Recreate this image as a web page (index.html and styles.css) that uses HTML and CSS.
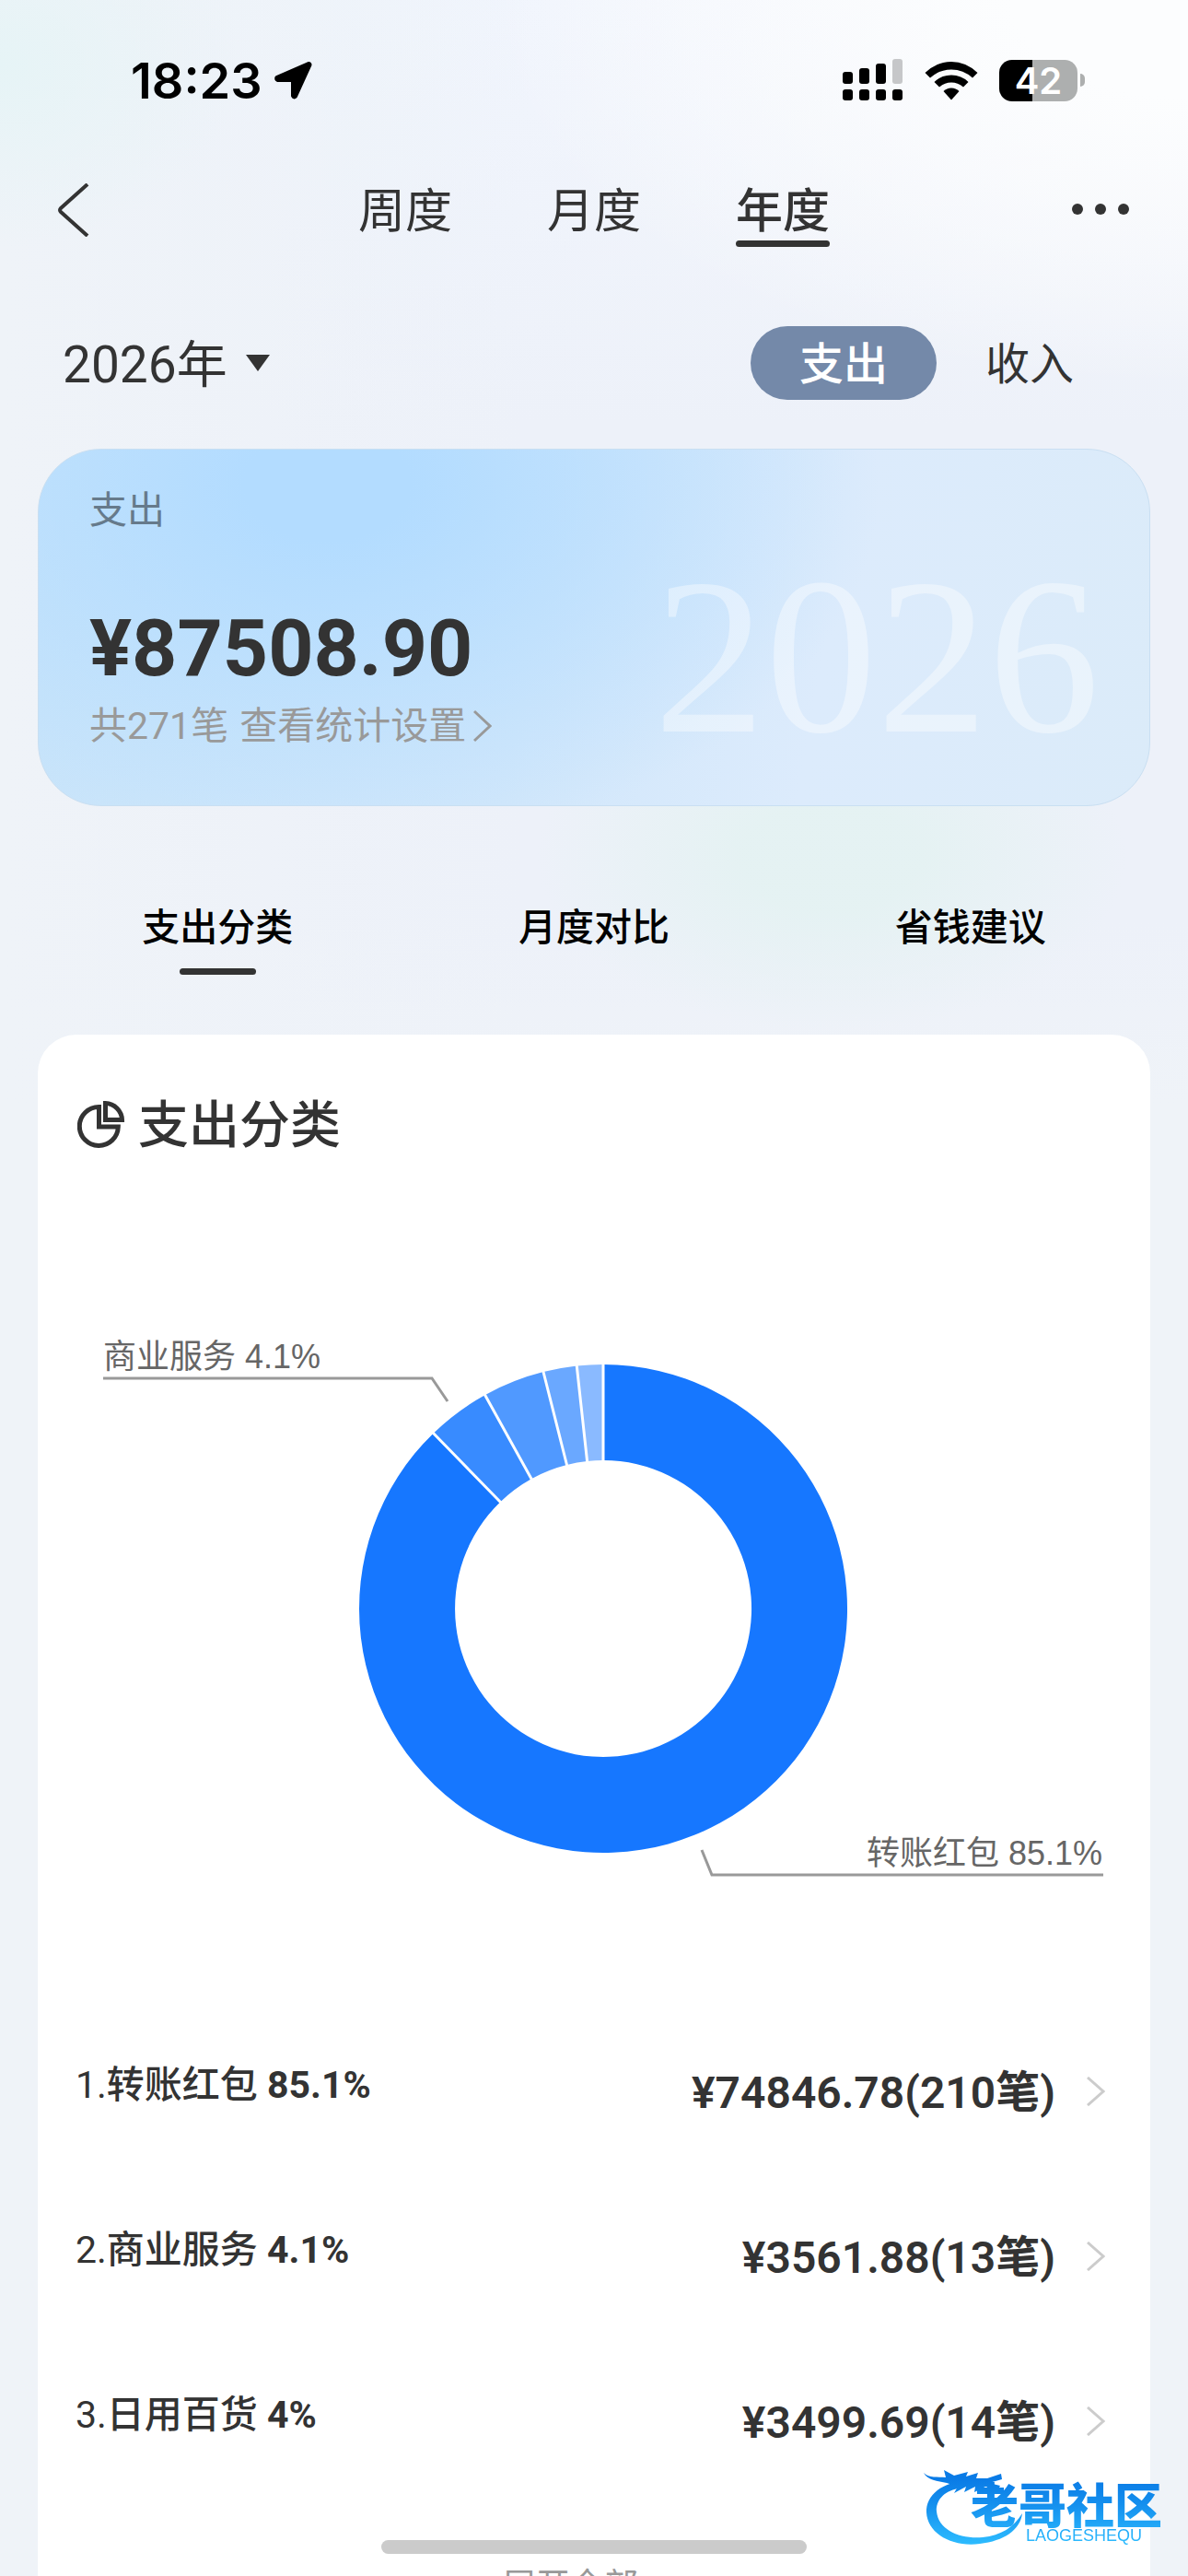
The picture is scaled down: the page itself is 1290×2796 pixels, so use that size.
FILE: index.html
```html
<!DOCTYPE html>
<html lang="zh-CN">
<head>
  <meta charset="utf-8">
  <meta name="viewport" content="width=device-width, initial-scale=1">
  <title>年度账单</title>
  <link rel="stylesheet" href="styles.css">
</head>
<body>
  <div class="status-bar">
    <div class="status-left">
      <span class="time">18:23</span>
      <svg class="icon-location" viewBox="0 0 42 42" aria-hidden="true">
        <path d="M38 3 L3.500 18 Q2.500 20 4.500 21 H21 V38 Q22 40.500 24 38.500 L39.500 4.500 Q39.500 3 38 3Z" stroke="#000" stroke-width="4" stroke-linejoin="round"/>
      </svg>
    </div>
    <div class="status-right">
      <svg class="icon-signal" viewBox="0 0 66 46" aria-hidden="true">
        <rect x="0" y="14" width="11" height="13" rx="3"/>
        <rect x="18" y="10" width="11" height="17" rx="3"/>
        <rect x="36" y="5" width="11" height="22" rx="3"/>
        <rect x="54" y="0" width="11" height="27" rx="3" fill="#c6c7c9"/>
        <rect x="0" y="33" width="11" height="12" rx="3"/>
        <rect x="18" y="33" width="11" height="12" rx="3"/>
        <rect x="36" y="33" width="11" height="12" rx="3"/>
        <rect x="54" y="33" width="11" height="12" rx="3"/>
      </svg>
      <svg class="icon-wifi" viewBox="0 0 58 43" aria-hidden="true">
        <path d="M0.500 13 Q13 1 29 1 Q45 1 57.500 13 L52 18.500 Q42 9.500 29 9.500 Q16 9.500 6 18.500Z"/>
        <path d="M10.500 23 Q18 15.500 29 15.500 Q40 15.500 47.500 23 L42 28.500 Q36 23.500 29 23.500 Q22 23.500 16 28.500Z"/>
        <path d="M20.500 33 Q24 29.500 29 29.500 Q34 29.500 37.500 33 L29.500 42 Q29 42.500 28.500 42Z"/>
      </svg>
      <div class="battery"><span class="battery-level">42</span></div>
    </div>
  </div>

  <header class="top-nav">
    <button class="icon-button back" type="button" aria-label="返回">
      <svg viewBox="0 0 36 58" width="36" height="58"><path d="M32 1 L3 27 Q1 29 3 31 L32 57"/></svg>
    </button>
    <nav class="period-tabs">
      <button type="button">周度</button>
      <button type="button">月度</button>
      <button type="button" class="active">年度</button>
    </nav>
    <button class="icon-button more" type="button" aria-label="更多">
      <svg viewBox="0 0 64 14" width="64" height="14"><circle cx="7" cy="6" r="6"/><circle cx="32" cy="6" r="6"/><circle cx="57" cy="6" r="6"/></svg>
    </button>
  </header>

  <div class="filter-row">
    <button class="year-button" type="button">2026年<span class="caret"></span></button>
    <div class="type-switch">
      <button type="button" class="active">支出</button>
      <button type="button">收入</button>
    </div>
  </div>

  <section class="summary-card">
    <div class="summary-label">支出</div>
    <div class="summary-amount">¥87508.90</div>
    <div class="summary-note">
      <span>共271笔</span>
      <a href="#">查看统计设置<svg viewBox="0 0 20 36" width="20" height="36"><path d="M1 2 L18 18 L1 34"/></svg></a>
    </div>
    <div class="summary-year">2026</div>
  </section>

  <nav class="section-tabs">
    <button type="button" class="active">支出分类</button>
    <button type="button">月度对比</button>
    <button type="button">省钱建议</button>
  </nav>

  <main class="panel">
    <h2 class="panel-title">
      <svg viewBox="0 0 52 52" width="52" height="52" aria-hidden="true">
        <path d="M23.500 6.500 A21 21 0 1 0 44.300 28 H23.500Z"/>
        <path d="M30.500 2.500 V20.500 H48.500 A18.500 18.500 0 0 0 30.500 2.500Z"/>
      </svg>
      支出分类
    </h2>

    <svg class="chart" viewBox="0 0 1208 700" role="img" aria-label="支出分类占比">
      <!-- slices, clockwise from 12 o'clock -->
      <path fill="#1677ff" d="M614 81 A265 265 0 1 1 429.600 155.700 L502 230.400 A161 161 0 1 0 614 185Z"/>
      <path fill="#388bff" d="M429.600 155.700 A265 265 0 0 1 485.500 114.200 L535.900 205.200 A161 161 0 0 0 502 230.400Z"/>
      <path fill="#5099ff" d="M485.500 114.200 A265 265 0 0 1 549 89.100 L574.500 190 A161 161 0 0 0 535.900 205.200Z"/>
      <path fill="#6aa8ff" d="M549 89.100 A265 265 0 0 1 585.400 82.500 L596.600 186 A161 161 0 0 0 574.500 190Z"/>
      <path fill="#8abaff" d="M585.400 82.500 A265 265 0 0 1 614 81 V185 A161 161 0 0 0 596.600 186Z"/>
      <path class="slice-gaps" d="M429 155 L503 231 M485 113 L536.500 206 M548.500 87 L575 192 M585 80 L596.800 188 M614 79 V187"/>
      <polyline class="leader" points="71,96 428,96 445,121"/>
      <polyline class="leader" points="721,608 732,635 1157,635"/>
      <text class="chart-label" x="71" y="85">商业服务 4.1%</text>
      <text class="chart-label" x="1156" y="624" text-anchor="end">转账红包 85.1%</text>
    </svg>

    <ul class="category-list">
      <li>
        <a href="#">
          <span class="name"><span class="rank">1.</span>转账红包 <span class="percent">85.1%</span></span>
          <span class="amount">¥74846.78(210笔)</span>
          <svg viewBox="0 0 20 32" width="20" height="32"><path d="M1 1 L18 16 L1 31"/></svg>
        </a>
      </li>
      <li>
        <a href="#">
          <span class="name"><span class="rank">2.</span>商业服务 <span class="percent">4.1%</span></span>
          <span class="amount">¥3561.88(13笔)</span>
          <svg viewBox="0 0 20 32" width="20" height="32"><path d="M1 1 L18 16 L1 31"/></svg>
        </a>
      </li>
      <li>
        <a href="#">
          <span class="name"><span class="rank">3.</span>日用百货 <span class="percent">4%</span></span>
          <span class="amount">¥3499.69(14笔)</span>
          <svg viewBox="0 0 20 32" width="20" height="32"><path d="M1 1 L18 16 L1 31"/></svg>
        </a>
      </li>
    </ul>
    <button class="expand-button" type="button">
      展开全部
      <svg viewBox="0 0 36 20" width="36" height="20"><path d="M2 2 L18 17 L34 2"/></svg>
    </button>
  </main>

  <svg class="site-logo" viewBox="0 0 270 90" width="270" height="90" role="img" aria-label="老哥社区">
    <defs>
      <linearGradient id="logoBlue" gradientUnits="userSpaceOnUse" x1="0" y1="12" x2="0" y2="84">
        <stop offset="0" stop-color="#0a7be6"/>
        <stop offset="0.4" stop-color="#1590ee"/>
        <stop offset="1" stop-color="#2dbcff"/>
      </linearGradient>
    </defs>
    <g fill="url(#logoBlue)">
      <!-- dragon body -->
      <path d="M58 16 C28 12 5 28 6 49 C7 72 34 87 64 83 C90 80 108 68 110 50 C101 65 87 74 67 76 C42 78 19 68 17 48 C16 36 25 26 40 23Z"/>
      <!-- head and whiskers -->
      <path d="M3 6 C9 12 18 10 27 11 L25 3 L36 9 L51 5 L49 10 L62 6 L60 12 L72 12 L87 7 L88 13 L74 17 L86 20 L84 24 L70 21 L58 27 L59 21 L47 27 L49 21 L36 28 L40 21 L28 17 C18 15 7 14 3 6Z"/>
      <text class="logo-name" x="54" y="61">老哥社区</text>
      <text class="logo-latin" x="114" y="80">LAOGESHEQU</text>
    </g>
  </svg>
  <div class="home-indicator"></div>
</body>
</html>
```
FILE: styles.css
```css
* {
  box-sizing: border-box;
}

html {
  scrollbar-width: none;
}

body {
  margin: 0;
  min-height: 100vh;
  font-family: Roboto, "Noto Sans CJK SC", sans-serif;
  color: #333;
  background-color: #eff3f8;
  background-image:
    radial-gradient(ellipse 320px 190px at 70% 930px, rgba(228, 242, 242, 0.9) 30%, rgba(228, 242, 242, 0)),
    radial-gradient(ellipse 260px 200px at 0 70px, #e6f4f6, rgba(230, 244, 246, 0)),
    radial-gradient(ellipse 760px 420px at 100% 0, #fcfdfe 25%, rgba(252, 253, 254, 0)),
    linear-gradient(90deg, #eff3f8, rgba(239, 243, 248, 0) 45%),
    linear-gradient(rgba(238, 242, 249, 0), #edf1f9 460px, #edf1f9 1000px, #eff3f8),
    linear-gradient(100deg, #eaf2f8, #f1f5fd 40%, #f8f9fc 80%);
  background-size: 100% 1200px;
  background-repeat: no-repeat;
}

button {
  padding: 0;
  border: 0;
  background: none;
  color: inherit;
  font: inherit;
  cursor: pointer;
}

a {
  color: inherit;
  text-decoration: none;
}

svg {
  display: block;
}

/* status bar */
.status-bar {
  display: flex;
  justify-content: space-between;
  align-items: center;
  height: 174px;
  padding: 0 112px 0 142px;
  color: #000;
}

.status-left,
.status-right {
  display: flex;
  align-items: center;
}

.status-left {
  gap: 12px;
}

.status-right {
  gap: 23px;
}

.time {
  font-family: Inter, sans-serif;
  font-size: 54px;
  font-weight: 600;
}

.icon-location {
  width: 42px;
  height: 42px;
}

.icon-signal {
  width: 66px;
  height: 46px;
}

.icon-wifi {
  width: 58px;
  height: 43px;
}

.battery {
  display: flex;
  align-items: center;
  gap: 3px;
}

.battery-level {
  width: 85px;
  height: 45px;
  border-radius: 14px;
  background: linear-gradient(90deg, #000 42%, #adafaf 42%);
  color: #fff;
  font-family: Inter, sans-serif;
  font-size: 40px;
  font-weight: 600;
  line-height: 45px;
  text-align: center;
}

.battery::after {
  content: "";
  width: 5px;
  height: 14px;
  border-radius: 0 5px 5px 0;
  background: #adafaf;
}

/* top navigation */
.top-nav {
  display: grid;
  grid-template-columns: 1fr auto 1fr;
  align-items: center;
  height: 108px;
  padding: 0 63px;
}

.icon-button {
  display: flex;
}

.back path {
  fill: none;
  stroke: #333;
  stroke-width: 4;
}

.more {
  justify-self: end;
}

.more circle {
  fill: #333;
}

.period-tabs {
  display: flex;
  gap: 103px;
  font-size: 51px;
}

.period-tabs button {
  position: relative;
  padding-top: 4px;
  line-height: 76px;
}

.period-tabs .active {
  font-weight: 500;
}

.period-tabs .active::after {
  content: "";
  position: absolute;
  left: 0;
  right: 0;
  bottom: 0;
  height: 7px;
  border-radius: 4px;
  background: #333;
}

/* year and type filters */
.filter-row {
  display: flex;
  justify-content: space-between;
  align-items: center;
  margin-top: 72px;
  padding: 0 71px 0 68px;
}

.year-button {
  display: flex;
  align-items: center;
  gap: 20px;
  padding-top: 4px;
  font-size: 55px;
  line-height: 76px;
}

.caret {
  margin-bottom: 4px;
  border: 13px solid transparent;
  border-top: 18px solid #333;
  border-bottom: 0;
}

.type-switch {
  display: flex;
}

.type-switch button {
  height: 80px;
  padding: 4px 53px 0;
  border-radius: 40px;
  font-size: 48px;
  line-height: 76px;
}

.type-switch .active {
  background: #7489a9;
  color: #fff;
  font-weight: 500;
}

/* yearly total */
.summary-card {
  position: relative;
  height: 388px;
  margin: 53px 41px 0;
  padding: 36px 55px 0;
  border: 1px solid #c9dff2;
  border-radius: 69px;
  background:
    radial-gradient(ellipse 600px 400px at 26% 10%, #b3dcff 15%, rgba(179, 220, 255, 0)),
    linear-gradient(100deg, #c8e4fa, #d1e7fb 45%, #dcebfc 70%, #dbebf9);
}

.summary-label {
  color: #667a8b;
  font-size: 41px;
  line-height: 60px;
}

.summary-amount {
  margin-top: 70px;
  font-size: 86px;
  font-weight: 700;
  line-height: 100px;
}

.summary-note {
  display: flex;
  gap: 12px;
  margin-top: 4px;
  color: #999;
  font-size: 41px;
  line-height: 60px;
}

.summary-note a {
  display: flex;
  align-items: center;
  gap: 8px;
}

.summary-note path {
  fill: none;
  stroke: #999;
  stroke-width: 3;
}

.summary-year {
  position: absolute;
  right: 54px;
  bottom: 32px;
  color: rgba(255, 255, 255, 0.4);
  font-family: "Liberation Serif", serif;
  font-size: 242px;
  line-height: 260px;
  pointer-events: none;
}

/* section tabs */
.section-tabs {
  display: grid;
  grid-template-columns: repeat(3, 1fr);
  margin: 102px 32px 65px;
  color: #000;
  font-size: 41px;
  font-weight: 500;
}

.section-tabs button {
  position: relative;
  padding-bottom: 21px;
  line-height: 60px;
}

.section-tabs .active::after {
  content: "";
  position: absolute;
  left: 50%;
  bottom: 0;
  width: 83px;
  height: 7px;
  margin-left: -41px;
  border-radius: 4px;
  background: #333;
}

/* category panel */
.panel {
  margin: 0 41px;
  padding: 67px 0 60px;
  border-radius: 42px 42px 0 0;
  background: #fff;
}

.panel-title {
  display: flex;
  align-items: center;
  gap: 14px;
  margin: 0;
  padding: 0 43px;
  font-size: 55px;
  font-weight: 500;
  line-height: 62px;
}

.panel-title path {
  fill: none;
  stroke: #333;
  stroke-width: 5;
}

.chart {
  width: 100%;
  margin-top: 148px;
}

.slice-gaps {
  fill: none;
  stroke: #fff;
  stroke-width: 3;
}

.leader {
  fill: none;
  stroke: #999;
  stroke-width: 3;
}

.chart-label {
  fill: #666;
  font-family: "Liberation Sans", "Noto Sans CJK SC", sans-serif;
  font-size: 36px;
}

.category-list {
  margin: 80px 0 0;
  padding: 0 49px 0 41px;
  list-style: none;
}

.category-list a {
  display: flex;
  align-items: center;
  height: 179px;
}

.category-list path {
  fill: none;
  stroke: #ccc;
  stroke-width: 3;
}

.name {
  flex: 1;
  padding-bottom: 22px;
  font-size: 41px;
  font-weight: 500;
}

.rank {
  font-weight: 400;
}

.percent {
  font-weight: 700;
}

.amount {
  margin-right: 34px;
  padding-bottom: 6px;
  font-size: 48px;
  font-weight: 600;
}

.expand-button {
  display: flex;
  align-items: center;
  gap: 16px;
  margin: 61px auto 0;
  color: #999;
  font-size: 37px;
  line-height: 60px;
}

.expand-button path {
  fill: none;
  stroke: #999;
  stroke-width: 3;
}

/* overlays */
.site-logo {
  position: fixed;
  right: 20px;
  bottom: 28px;
}

.logo-name {
  font-family: "Noto Sans CJK SC", sans-serif;
  font-size: 52px;
  font-weight: 900;
}

.logo-latin {
  font-family: "Liberation Sans", sans-serif;
  font-size: 18px;
}

.home-indicator {
  position: fixed;
  left: 50%;
  bottom: 24px;
  width: 462px;
  height: 15px;
  margin-left: -231px;
  border-radius: 8px;
  background: #cbcbcb;
}
```
